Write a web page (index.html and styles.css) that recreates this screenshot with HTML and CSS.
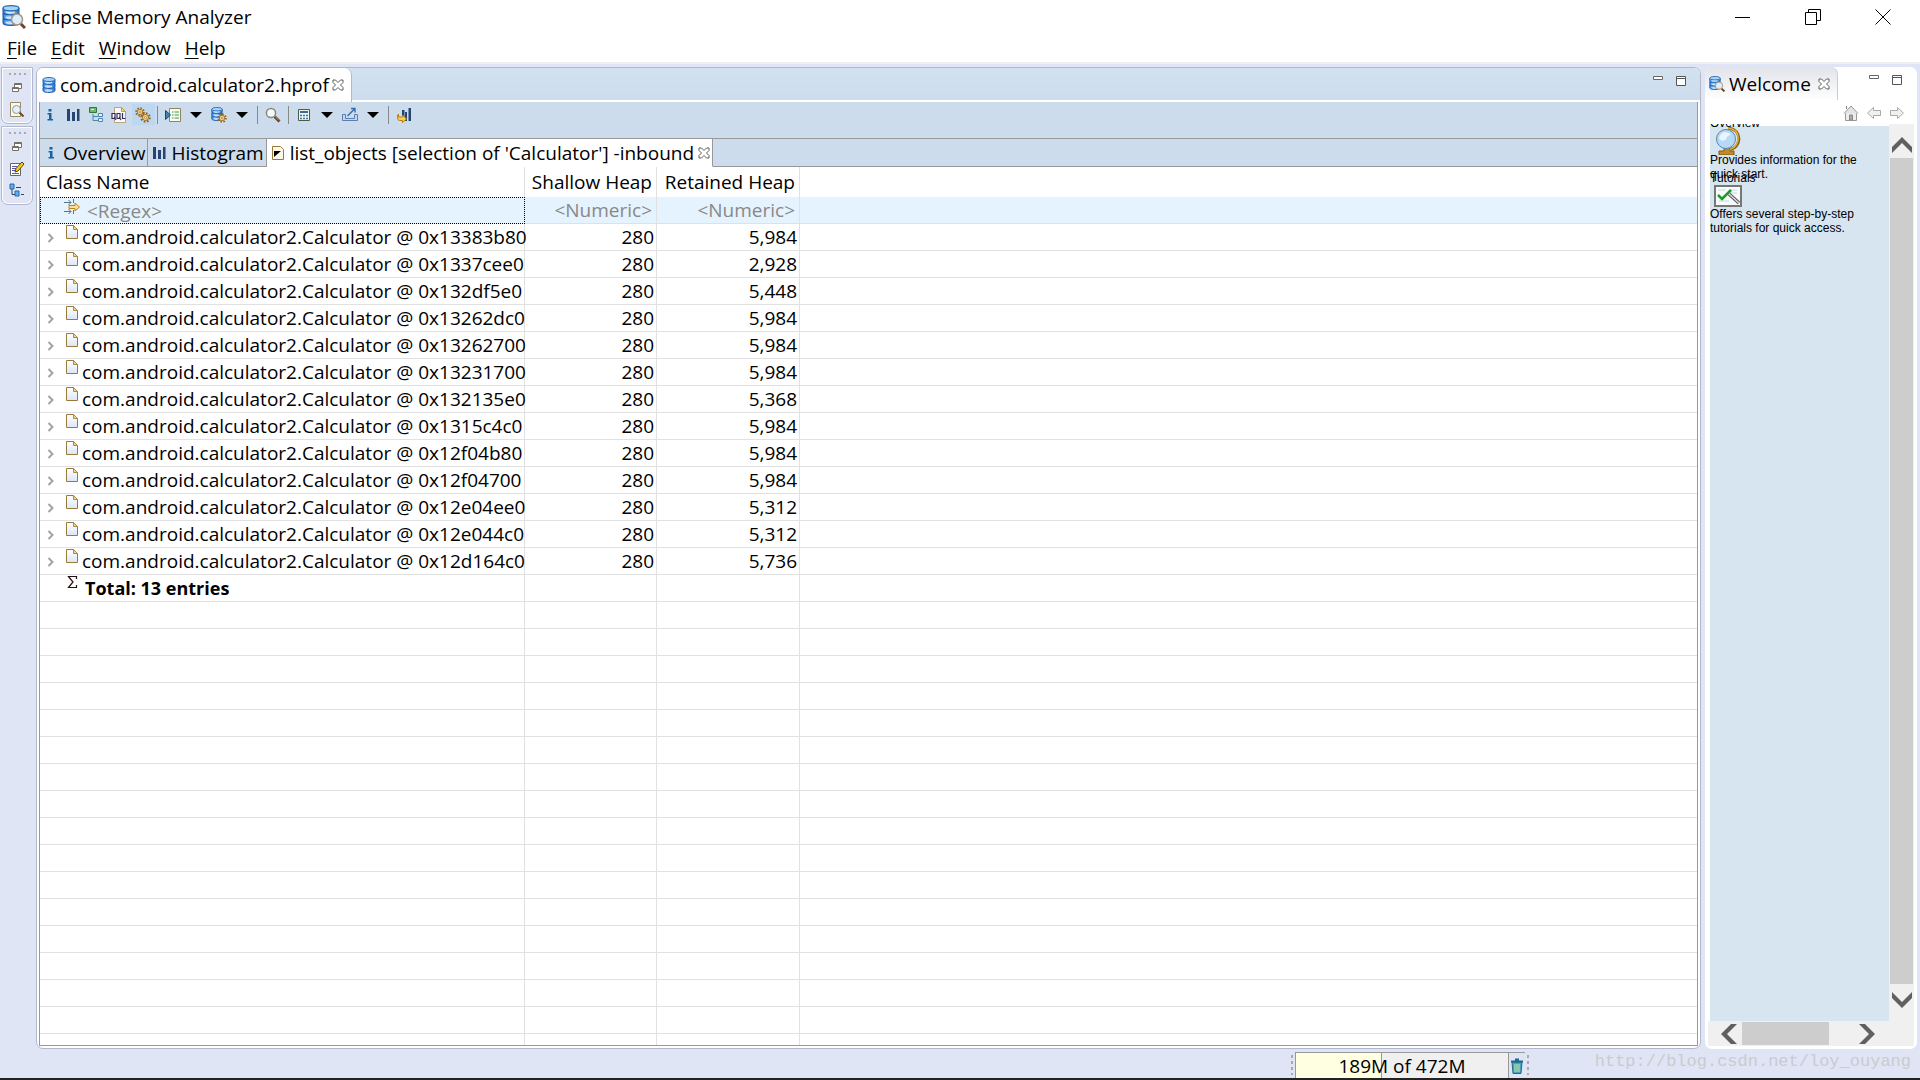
FILE: index.html
```html
<!DOCTYPE html>
<html lang="en">
<head>
    <meta charset="utf-8" />
    <title>Eclipse Memory Analyzer</title>
    <link rel="stylesheet" href="styles.css">
</head>
<body>
    <!-- shared icons -->
    <svg class="defs" width="0" height="0" aria-hidden="true">
        <linearGradient id="blue" x1="0" x2="1" y1="0" y2="0">
            <stop offset="0" stop-color="#2f7fdc"/><stop offset=".4" stop-color="#a9d6fb"/><stop offset="1" stop-color="#2a6fcb"/>
        </linearGradient>
        <linearGradient id="sheet" x1="0" x2="0" y1="0" y2="1">
            <stop offset="0" stop-color="#fff"/><stop offset="1" stop-color="#dbe6f6"/>
        </linearGradient>
        <symbol id="db" viewBox="0 0 13 16">
            <path d="M.5 10.500v3c0 1.300 2.500 2 6 2s6-.7 6-2v-3z" fill="url(#blue)" stroke="#1f5fae"/>
            <path d="M.5 6.500v3c0 1.300 2.500 2 6 2s6-.7 6-2v-3z" fill="url(#blue)" stroke="#1f5fae"/>
            <path d="M.5 2.500v3c0 1.300 2.500 2 6 2s6-.7 6-2v-3z" fill="url(#blue)" stroke="#1f5fae"/>
            <ellipse cx="6.500" cy="2.500" rx="6" ry="2" fill="#a8d4f8" stroke="#2a6db8"/>
            <path d="M2.500 5.200c2 .8 5 .8 7 .2M2.500 9.200c2 .8 5 .8 7 .2M2.500 13.200c2 .8 5 .8 7 .2" fill="none" stroke="#d4ecff"/>
        </symbol>
        <symbol id="dbfind" viewBox="0 0 24 24">
            <use href="#db" x="0" y="0" width="18" height="21"/>
            <path d="M18.500 18.500l4.500 4.500" stroke="#6b4a2c" stroke-width="3"/>
            <circle cx="15" cy="14.500" r="5.500" fill="#dceefb" stroke="#a8977c" stroke-width="1.500"/>
        </symbol>
        <symbol id="info" viewBox="0 0 16 16">
            <path d="M6.500 2h3v2.500h-3zM5.500 6h4v6h1.500v1.500h-5.500v-1.500h1.500v-4.500h-1.500z" fill="#1463a5"/>
        </symbol>
        <symbol id="bars" viewBox="0 0 16 16">
            <path d="M2 2h3v12h-3zM7 5h3v9h-3zM12 2h2.500v12h-2.500z" fill="#264573"/>
        </symbol>
        <symbol id="gear" viewBox="0 0 12 12">
            <circle cx="6" cy="6" r="4.500" fill="none" stroke="#8f6420" stroke-width="2.500" stroke-dasharray="1.800 1.700"/>
            <circle cx="6" cy="6" r="3.200" fill="#f8e2a8" stroke="#b07a26" stroke-width="1.200"/>
            <circle cx="6" cy="6" r="1.200" fill="#fff" stroke="#8f6420" stroke-width=".8"/>
        </symbol>
        <symbol id="find" viewBox="0 0 16 16">
            <path d="M9.500 9.500l5 5" stroke="#5c3d25" stroke-width="2.800"/>
            <path d="M9.500 9l4.500 4.500" stroke="#c79b6b" stroke-width="1"/>
            <circle cx="6" cy="6" r="4.600" fill="#f3f9fd" stroke="#8d8672" stroke-width="1.500"/>
        </symbol>
        <symbol id="close" viewBox="0 0 12 12">
            <path d="M1 1h2.500l2.500 2.500 2.500-2.500h2.500v2.500l-2.500 2.500 2.500 2.500v2.500h-2.500l-2.500-2.500-2.500 2.500h-2.500v-2.500l2.500-2.500-2.500-2.500z" fill="#fff" stroke="#5d5d5d" stroke-width="1"/>
        </symbol>
        <symbol id="caret" viewBox="0 0 12 8"><path d="M0 1h12l-6 6z" fill="#000"/></symbol>
        <symbol id="page" viewBox="0 0 12 14">
            <path d="M.5.5h7l4 4v9h-11z" fill="url(#sheet)" stroke="#9a7a3a"/>
            <path d="M7.500.5v4h4z" fill="#f0d796" stroke="#b5893a"/>
        </symbol>
        <symbol id="arrow" viewBox="0 0 8 10"><path d="M1.500 1l4 4-4 4" fill="none" stroke="#a3a3a3" stroke-width="2"/></symbol>
        <symbol id="min" viewBox="0 0 12 12"><path d="M1.500 1.500h9v3h-9z" fill="#fff" stroke="#666"/></symbol>
        <symbol id="max" viewBox="0 0 12 12"><path d="M1.500 1.500h9v9h-9zM1 3.500h10" fill="#fff" stroke="#555"/></symbol>
        <symbol id="restore" viewBox="0 0 12 12">
            <path d="M3.500 1.500h7v5h-7zM3 2.500h8" fill="#fff" stroke="#766f66"/>
            <path d="M1.500 5.500h6v4h-6zM1 6.500h7" fill="#fff" stroke="#766f66"/>
        </symbol>
        <symbol id="chev" viewBox="0 0 20 16"><path d="M0 10l10-10 10 10v6l-10-10-10 10z" fill="#606060"/></symbol>
    </svg>

    <header class="titlebar">
        <svg class="i24"><use href="#dbfind"/></svg>
        <h1>Eclipse Memory Analyzer</h1>
        <div class="winbtns">
            <button aria-label="Minimize"><svg class="i16" viewBox="0 0 16 16"><path d="M0 8.500h15" stroke="#000"/></svg></button>
            <button aria-label="Restore"><svg class="i16" viewBox="0 0 16 16"><path d="M.5 3.500h11v12h-11zM3.500 3v-2.500h12v11h-3.500" fill="none" stroke="#000"/></svg></button>
            <button aria-label="Close"><svg class="i16" viewBox="0 0 16 16"><path d="M.5.5l15 15M15.500.5l-15 15" stroke="#000"/></svg></button>
        </div>
    </header>

    <nav class="menubar">
        <button><u>F</u>ile</button>
        <button><u>E</u>dit</button>
        <button><u>W</u>indow</button>
        <button><u>H</u>elp</button>
    </nav>

    <div class="workbench">
        <aside class="rail">
            <div class="railbox">
                <span class="grip"></span>
                <button aria-label="Restore"><svg class="i12"><use href="#restore"/></svg></button>
                <button aria-label="Inspector"><svg class="i16" viewBox="0 0 16 16"><path d="M1.500.5h10v14h-10z" fill="#fdf8ea" stroke="#998a63"/><path d="M10 10l4.500 4.500" stroke="#6b4a2c" stroke-width="2"/><circle cx="7.500" cy="7.500" r="4" fill="#e3f1fb" stroke="#8c9aa5"/></svg></button>
            </div>
            <div class="railbox">
                <span class="grip"></span>
                <button aria-label="Restore"><svg class="i12"><use href="#restore"/></svg></button>
                <button aria-label="Notes"><svg class="i16" viewBox="0 0 16 16"><path d="M1.500 2.500h10v12h-10z" fill="#fff" stroke="#666"/><path d="M3 5.500h5M3 7.500h4M3 9.500h3M3 12.500h7" stroke="#55a"/><path d="M6 11l1-3.500 6-6.500 2 2-6 7z" fill="#f5d315" stroke="#4b420c"/></svg></button>
                <button aria-label="Navigation History"><svg class="i16" viewBox="0 0 16 16"><path d="M3 5v6.500h4M7 4.500h5M12 11.500h3" fill="none" stroke="#345"/><path d="M1 1h4v5h-4zM6 8h4v5h-4z" fill="#62adee" stroke="#2168b5"/></svg></button>
            </div>
        </aside>

        <main class="editor">
            <div class="tabs">
                <div class="tab">
                    <svg class="i16 dbicon"><use href="#db"/></svg>
                    <span>com.android.calculator2.hprof</span>
                    <button aria-label="Close"><svg class="i12"><use href="#close"/></svg></button>
                </div>
                <div class="panebtns">
                    <button aria-label="Minimize"><svg class="i12"><use href="#min"/></svg></button>
                    <button aria-label="Maximize"><svg class="i12"><use href="#max"/></svg></button>
                </div>
            </div>

            <div class="pane">
                <div class="toolbar">
                    <button aria-label="Overview"><svg class="i16"><use href="#info"/></svg></button>
                    <button aria-label="Histogram"><svg class="i16"><use href="#bars"/></svg></button>
                    <button aria-label="Dominator tree"><svg class="i16" viewBox="0 0 16 16"><path d="M5 7v6.500h5M5 9.500h5" fill="none" stroke="#4a86b0"/><path d="M1.500.5h7v5h-7z" fill="#6fb76f" stroke="#2d7a3e"/><path d="M3 2.500h3" stroke="#cfc"/><path d="M10.500 6.500h4v3h-4zM10.500 11.500h4v3h-4z" fill="#e8f3fb" stroke="#4a86b0"/></svg></button>
                    <button aria-label="OQL"><svg class="i16" viewBox="0 0 16 16"><path d="M3.500.5h7l4 4v11h-11z" fill="#fbfbfb" stroke="#b9a57a"/><path d="M10.500.5v4h4z" fill="#ecd190" stroke="#c39d4e"/><path d="M1 6.500h3v5h-3zM6 6.500h3v5h-3zM3 10l2 3M8 10l2 3M11.500 6v5.500h3" fill="#fff" stroke="#352b58" stroke-width="1.200"/></svg></button>
                    <button class="on" aria-label="Thread overview"><svg class="i16" viewBox="0 0 16 16"><use href="#gear" x="0" y="0" width="10" height="10"/><use href="#gear" x="5" y="5" width="11" height="11"/></svg></button>
                    <i class="sep"></i>
                    <button aria-label="Run report"><svg class="i16" viewBox="0 0 16 16"><path d="M4.500 1.500h11v13h-11z" fill="#fbfbf4" stroke="#8a8660"/><path d="M7 5h1.500M7 8h1.500M7 11h1.500M9.500 5h4.500M9.500 8h4.500M9.500 11h4.500" stroke="#3d9a4a"/><path d="M.5 3.500v9l5-4.500z" fill="#3c86a8" stroke="#19486b"/></svg></button>
                    <button aria-label="Reports menu"><svg class="caret"><use href="#caret"/></svg></button>
                    <button aria-label="Queries"><svg class="i16" viewBox="0 0 16 16"><use href="#db" x="0" y="0" width="12" height="14"/><use href="#gear" x="6" y="6" width="10" height="10"/></svg></button>
                    <button aria-label="Queries menu"><svg class="caret"><use href="#caret"/></svg></button>
                    <i class="sep"></i>
                    <button aria-label="Find object"><svg class="i16"><use href="#find"/></svg></button>
                    <i class="sep"></i>
                    <button aria-label="Calculate"><svg class="i16" viewBox="0 0 16 16"><path d="M2.500 2.500h11v11h-11z" fill="#eef3ec" stroke="#4c5b4c"/><path d="M4 5h8" stroke="#356c9c" stroke-width="2"/><path d="M4 8.500h8M4 11.500h8" stroke="#3f76a6" stroke-width="1.500" stroke-dasharray="2 1"/></svg></button>
                    <button aria-label="Calculate menu"><svg class="caret"><use href="#caret"/></svg></button>
                    <button aria-label="Export"><svg class="i16" viewBox="0 0 16 16"><path d="M.5 7.500h3v4h9v-4h3v6h-15z" fill="#c4d5ee" stroke="#5a7fb5"/><path d="M5.500 9l7-7M9 1.500h4v4" fill="none" stroke="#336caf" stroke-width="1.400"/></svg></button>
                    <button aria-label="Export menu"><svg class="caret"><use href="#caret"/></svg></button>
                    <i class="sep"></i>
                    <button aria-label="Compare"><svg class="i16" viewBox="0 0 16 16"><path d="M6 3h2.500v7h-2.500zM9 5h2v9h-2zM12.500 1h2.500v13h-2.500z" fill="#264573"/><path d="M2.500 7v3h4v-2l4 4-4 3.500v-2h-3c-2 0-3-4-1-6.500z" fill="#f8cf52" stroke="#b77d12"/></svg></button>
                </div>

                <div class="subtabs">
                    <button class="subtab"><svg class="i16"><use href="#info"/></svg>Overview</button>
                    <button class="subtab"><svg class="i16"><use href="#bars"/></svg>Histogram</button>
                    <button class="subtab active"><svg class="i16" viewBox="0 0 16 16"><path d="M2.500 1.500h8l3 3v10h-11z" fill="#fdf9ea" stroke="#9a7a3a"/><path d="M4 6h7l-7 6z" fill="#000"/></svg>list_objects [selection of 'Calculator'] -inbound<svg class="i12"><use href="#close"/></svg></button>
                    <div class="fill"></div>
                </div>

                <div class="results">
                    <table>
                        <colgroup><col class="name"><col class="shallow"><col class="retained"><col></colgroup>
                        <thead>
                            <tr><th>Class Name</th><th class="num">Shallow Heap</th><th class="num">Retained Heap</th><th></th></tr>
                        </thead>
                        <tbody>
                            <tr class="filter"><td><div class="cell"><svg class="i16" viewBox="0 0 16 16"><path d="M0 3.500h7M4.500 1l2.500 2.500-2.500 2.500M9.500 0v4M0 12.500h7M4.500 10l2.500 2.500-2.500 2.500M9.500 11v4" fill="none" stroke="#557387"/><path d="M5 6.500h6v-2.500l4.500 4-4.500 4v-2.500h-6z" fill="#fbdf9b" stroke="#bf8315"/></svg>&lt;Regex&gt;</div></td><td class="num">&lt;Numeric&gt;</td><td class="num">&lt;Numeric&gt;</td><td></td></tr>
                            <tr><td><div class="cell"><svg class="exp"><use href="#arrow"/></svg><svg class="page"><use href="#page"/></svg>com.android.calculator2.Calculator @ 0x13383b80</div></td><td class="num">280</td><td class="num">5,984</td><td></td></tr>
                            <tr><td><div class="cell"><svg class="exp"><use href="#arrow"/></svg><svg class="page"><use href="#page"/></svg>com.android.calculator2.Calculator @ 0x1337cee0</div></td><td class="num">280</td><td class="num">2,928</td><td></td></tr>
                            <tr><td><div class="cell"><svg class="exp"><use href="#arrow"/></svg><svg class="page"><use href="#page"/></svg>com.android.calculator2.Calculator @ 0x132df5e0</div></td><td class="num">280</td><td class="num">5,448</td><td></td></tr>
                            <tr><td><div class="cell"><svg class="exp"><use href="#arrow"/></svg><svg class="page"><use href="#page"/></svg>com.android.calculator2.Calculator @ 0x13262dc0</div></td><td class="num">280</td><td class="num">5,984</td><td></td></tr>
                            <tr><td><div class="cell"><svg class="exp"><use href="#arrow"/></svg><svg class="page"><use href="#page"/></svg>com.android.calculator2.Calculator @ 0x13262700</div></td><td class="num">280</td><td class="num">5,984</td><td></td></tr>
                            <tr><td><div class="cell"><svg class="exp"><use href="#arrow"/></svg><svg class="page"><use href="#page"/></svg>com.android.calculator2.Calculator @ 0x13231700</div></td><td class="num">280</td><td class="num">5,984</td><td></td></tr>
                            <tr><td><div class="cell"><svg class="exp"><use href="#arrow"/></svg><svg class="page"><use href="#page"/></svg>com.android.calculator2.Calculator @ 0x132135e0</div></td><td class="num">280</td><td class="num">5,368</td><td></td></tr>
                            <tr><td><div class="cell"><svg class="exp"><use href="#arrow"/></svg><svg class="page"><use href="#page"/></svg>com.android.calculator2.Calculator @ 0x1315c4c0</div></td><td class="num">280</td><td class="num">5,984</td><td></td></tr>
                            <tr><td><div class="cell"><svg class="exp"><use href="#arrow"/></svg><svg class="page"><use href="#page"/></svg>com.android.calculator2.Calculator @ 0x12f04b80</div></td><td class="num">280</td><td class="num">5,984</td><td></td></tr>
                            <tr><td><div class="cell"><svg class="exp"><use href="#arrow"/></svg><svg class="page"><use href="#page"/></svg>com.android.calculator2.Calculator @ 0x12f04700</div></td><td class="num">280</td><td class="num">5,984</td><td></td></tr>
                            <tr><td><div class="cell"><svg class="exp"><use href="#arrow"/></svg><svg class="page"><use href="#page"/></svg>com.android.calculator2.Calculator @ 0x12e04ee0</div></td><td class="num">280</td><td class="num">5,312</td><td></td></tr>
                            <tr><td><div class="cell"><svg class="exp"><use href="#arrow"/></svg><svg class="page"><use href="#page"/></svg>com.android.calculator2.Calculator @ 0x12e044c0</div></td><td class="num">280</td><td class="num">5,312</td><td></td></tr>
                            <tr><td><div class="cell"><svg class="exp"><use href="#arrow"/></svg><svg class="page"><use href="#page"/></svg>com.android.calculator2.Calculator @ 0x12d164c0</div></td><td class="num">280</td><td class="num">5,736</td><td></td></tr>
                            <tr class="total"><td><div class="cell"><svg class="i16" viewBox="0 0 16 16"><path d="M11.500 4v-2.500h-8l4.500 5.500-4.500 5.500h8v-2.500" fill="none" stroke="#211" stroke-width="1.200"/></svg>Total: 13 entries</div></td><td></td><td></td><td></td></tr>
                            <tr class="blank"><td></td><td></td><td></td><td></td></tr>
                        </tbody>
                    </table>
                </div>
            </div>
        </main>

        <section class="welcome">
            <div class="wtabs">
                <div class="wtab">
                    <svg class="i16"><use href="#dbfind"/></svg>
                    <span>Welcome</span>
                    <button aria-label="Close"><svg class="i12"><use href="#close"/></svg></button>
                </div>
                <div class="panebtns">
                    <button aria-label="Minimize"><svg class="i12"><use href="#min"/></svg></button>
                    <button aria-label="Maximize"><svg class="i12"><use href="#max"/></svg></button>
                </div>
            </div>
            <div class="wtools">
                <button aria-label="Home"><svg class="i16" viewBox="0 0 16 16"><path d="M2.500 8v7.500h11v-7.500" fill="#eee" stroke="#999"/><path d="M1 8.500l7-7.500 7 7.500" fill="#e4e4e4" stroke="#999"/><path d="M3.500 1v3M6.500 15v-5h3v5z" fill="#aaa" stroke="#888"/></svg></button>
                <button aria-label="Back"><svg class="i16" viewBox="0 0 16 16"><path d="M1.500 8l6-5.500v3h7v5h-7v3z" fill="#f1f1ec" stroke="#aaa"/></svg></button>
                <button aria-label="Forward"><svg class="i16" viewBox="0 0 16 16"><path d="M14.500 8l-6-5.500v3h-7v5h7v3z" fill="#f1f1ec" stroke="#aaa"/></svg></button>
            </div>
            <div class="browser">
                <div class="intro">
                    <a href="#">
                        <b>Overview</b>
                        <svg class="globe" viewBox="0 0 28 28"><path d="M14 1c16 2 12 20 3 21" fill="none" stroke="#8a6412" stroke-width="3"/><path d="M14 1c15 2 11 19 3 21" fill="none" stroke="#e2b13c" stroke-width="1.500"/><path d="M10 20h6v4h4v4h-15v-4h5z" fill="#c18a24" stroke="#815a10"/><circle cx="12" cy="12" r="9.500" fill="#b5d9f6" stroke="#5a87ad"/><path d="M5 11c2-7 9-7 12-3-3 0-4 2-5 4s-5 3-7-1z" fill="#e9f6ff"/></svg>
                        <span>Provides information for the quick start.</span>
                    </a>
                    <a href="#" class="second">
                        <b>Tutorials</b>
                        <svg class="board" viewBox="0 0 28 22"><path d="M1 1h26v20h-26z" fill="#f6fbfb" stroke="#777" stroke-width="2"/><path d="M4 5h8M5 16h10M15 5h8M16 8h7" stroke="#c5dcda"/><path d="M4 10l4 4 9-9" fill="none" stroke="#1c9a26" stroke-width="2.500"/><path d="M15 9l10 9" stroke="#555" stroke-width="3.500"/><path d="M15 9l10 9" stroke="#ddd" stroke-width="1.500"/></svg>
                        <span>Offers several step-by-step tutorials for quick access.</span>
                    </a>
                </div>
                <div class="vbar">
                    <svg class="chev"><use href="#chev"/></svg>
                    <div class="thumb"></div>
                    <svg class="chev down"><use href="#chev"/></svg>
                </div>
                <div class="hbar">
                    <svg class="chev left"><use href="#chev"/></svg>
                    <div class="thumb"></div>
                    <svg class="chev right"><use href="#chev"/></svg>
                </div>
            </div>
        </section>
    </div>

    <footer class="status">
        <span class="vgrip"></span>
        <div class="heap">189M of 472M</div>
        <button class="gc" aria-label="Run Garbage Collector"><svg class="i16" viewBox="0 0 16 16"><path d="M3 4h10l-1 11.500h-8z" fill="#4aa3b8" stroke="#1d6b8e"/><path d="M2 3.500h12M6 1.500h4" stroke="#1d6b8e" stroke-width="2"/><path d="M6 6v8M8 6v8M10 6v8" stroke="#c3e7a8"/></svg></button>
        <span class="vgrip"></span>
        <span class="mark">http://blog.csdn.net/loy_ouyang</span>
    </footer>
</body>
</html>
```
FILE: styles.css
```css
*{
    box-sizing:border-box;
    margin:0;
    padding:0;
}
body{
    display:flex;
    flex-direction:column;
    height:100vh;
    overflow:hidden;
    background:#dfe5f5;
    color:#000;
    font-family:"Open Sans","Noto Sans",sans-serif;
    font-size:19px;
    line-height:26px;
}
button{
    display:flex;
    align-items:center;
    justify-content:center;
    border:0;
    background:none;
    font:inherit;
    color:inherit;
    white-space:nowrap;
}
svg{
    flex:none;
    display:block;
}
.defs{
    position:absolute;
}
.i12{
    width:12px;
    height:12px;
}
.i16{
    width:16px;
    height:16px;
}
.i24{
    width:24px;
    height:24px;
}

/* title and menu */
.titlebar{
    display:flex;
    align-items:center;
    height:34px;
    padding:0 2px;
    gap:5px;
    background:#fff;
}
.titlebar h1{
    font-size:19px;
    font-weight:normal;
}
.winbtns{
    display:flex;
    margin-left:auto;
}
.winbtns button{
    width:70px;
    height:34px;
}
.menubar{
    display:flex;
    gap:14px;
    height:30px;
    padding-left:7px;
    background:#fff;
    border-bottom:2px solid #f0f0f0;
}
.menubar u{
    text-underline-offset:3px;
    text-decoration-thickness:1px;
}

/* workbench */
.workbench{
    flex:1;
    display:flex;
    min-height:0;
    padding:3px 3px 0 1px;
}
.rail{
    width:32px;
    margin-right:3px;
}
.railbox{
    display:flex;
    flex-direction:column;
    align-items:center;
    margin-bottom:2px;
    padding:4px 0 2px;
    border:1px solid #b1b8cd;
    border-radius:0 0 7px 7px;
    box-shadow:inset 0 0 0 1px #fff;
}
.railbox button{
    width:24px;
    height:22px;
}
.grip{
    width:17px;
    height:4px;
    margin-bottom:1px;
    background:repeating-linear-gradient(90deg,#aaa 0,#aaa 2px,transparent 2px,transparent 5px) 0 1px/17px 2px no-repeat;
}
.editor{
    flex:1;
    display:flex;
    flex-direction:column;
    min-width:0;
    background:#fff;
    border:1px solid #b1b8cd;
    border-radius:7px;
    overflow:hidden;
}
.tabs{
    display:flex;
    height:34px;
    background:linear-gradient(#d2e1ee,#cddded) 0 0/100% 32px no-repeat;
}
.tab{
    display:flex;
    align-items:center;
    height:34px;
    padding:0 4px;
    background:#fff;
    border-right:1px solid #b1b8cd;
    border-radius:0 7px 0 0;
}
.dbicon{
    margin-right:3px;
}
.tab button{
    width:18px;
}
.panebtns{
    display:flex;
    gap:11px;
    margin-left:auto;
    padding-right:13px;
    align-items:flex-start;
    padding-top:7px;
}
.pane{
    flex:1;
    display:flex;
    flex-direction:column;
    min-height:0;
    margin:0 2px 2px;
    border:solid #999;
    border-width:0 1px 1px;
}
.toolbar{
    display:flex;
    height:36px;
    background:#cddcec;
}
.toolbar button{
    width:23px;
    height:21px;
    margin-top:2px;
    padding-right:3px;
}
.toolbar .on{
    padding-right:2px;
    background:#bdd7f1;
}
.caret{
    width:12px;
    height:8px;
}
.sep{
    width:1px;
    height:18px;
    margin:4px 5px 0 2px;
    background:#888;
}
.subtabs{
    display:flex;
    height:29px;
    background:#cddcec;
    border-top:1px solid #999;
}
.subtab{
    gap:4px;
    padding:0 2px 0 3px;
    border-right:1px solid #999;
    border-bottom:1px solid #999;
}
.subtab.active{
    background:#fff;
    border-bottom-color:#fff;
}
.fill{
    flex:1;
    border-bottom:1px solid #999;
}

/* result table */
.results{
    flex:1;
    min-height:0;
    overflow:hidden;
}
table{
    width:100%;
    height:100%;
    table-layout:fixed;
    border-collapse:separate;
    border-spacing:0;
    background:#fff;
}
.name{
    width:485px;
}
.shallow{
    width:132px;
}
.retained{
    width:143px;
}
th{
    height:30px;
    padding:0 4px 0 6px;
    font-weight:normal;
    text-align:left;
    white-space:nowrap;
}
td{
    height:27px;
    padding:0 2px 0 3px;
    border-bottom:1px solid #e1e1e1;
    white-space:nowrap;
}
th,td{
    border-right:1px solid #e1e1e1;
}
th:last-child,td:last-child{
    border-right:0;
}
.num{
    text-align:right;
}
.filter td{
    padding-right:4px;
    background:#e5f3ff;
    color:#888;
}
.filter td:first-child{
    border:1px dotted #000;
}
.cell{
    display:flex;
    align-items:flex-start;
    height:26px;
}
.exp{
    width:8px;
    height:10px;
    margin:9px 11px 0 4px;
}
.page{
    width:12px;
    height:14px;
    margin:1px 4px 0 0;
}
.filter .cell{
    height:24px;
    padding-left:20px;
    gap:7px;
    line-height:24px;
}
.total{
    font-size:18px;
    font-weight:bold;
}
.total .cell{
    padding-left:22px;
    gap:4px;
}
.blank td{
    height:auto;
    border-bottom:0;
    background:repeating-linear-gradient(#fff 0,#fff 26px,#e1e1e1 26px,#e1e1e1 27px);
}

/* welcome view */
.welcome{
    width:212px;
    margin-left:4px;
    display:flex;
    flex-direction:column;
    padding:0 3px 3px;
    background:#fff;
    border-radius:7px;
}
.wtabs{
    display:flex;
    height:33px;
}
.wtab{
    display:flex;
    align-items:center;
    gap:4px;
    margin-left:-3px;
    padding:0 4px;
    background:linear-gradient(#e1e3ea,#fff);
    border-right:1px solid #c8ccd8;
    border-radius:7px 7px 0 0;
}
.wtab button{
    width:18px;
}
.wtabs .panebtns{
    padding-right:11px;
}
.wtools{
    display:flex;
    justify-content:flex-end;
    gap:7px;
    height:24px;
    padding-right:9px;
}
.wtools button{
    height:26px;
}
.browser{
    flex:1;
    display:grid;
    grid-template-columns:1fr 25px;
    grid-template-rows:1fr 25px;
    min-height:0;
    background:#f0f0f0;
}
.intro{
    min-height:0;
    overflow:hidden;
    border-left:2px solid #fff;
    background:linear-gradient(#fff 2px,#d6e5ef 2px);
    font-family:"Liberation Sans",Arial,sans-serif;
    font-size:12px;
    line-height:14px;
}
.intro a{
    display:block;
    color:#000;
    text-decoration:none;
}
.intro b{
    display:block;
    font-weight:normal;
}
.intro a:first-child{
    margin-top:-8px;
}
.intro .second{
    margin-top:-10px;
}
.intro span{
    display:block;
    width:160px;
}
.globe{
    width:28px;
    height:28px;
    margin:-3px 0 0 4px;
}
.globe + span{
    margin-top:-2px;
}
.board{
    width:28px;
    height:22px;
    margin-left:4px;
}
.vbar{
    display:flex;
    flex-direction:column;
    align-items:center;
    padding:13px 0;
}
.thumb{
    flex:1;
    background:#cdcdcd;
}
.vbar .thumb{
    width:23px;
    margin:5px 0 8px;
}
.chev{
    width:20px;
    height:16px;
}
.down{
    transform:rotate(180deg);
}
.left{
    transform:rotate(-90deg);
}
.right{
    transform:rotate(90deg);
}
.hbar{
    grid-column:1/3;
    display:flex;
    align-items:center;
    padding:0 37px 0 11px;
}
.hbar .thumb{
    height:23px;
    margin:0 28px 0 3px;
}

/* status line */
.status{
    position:relative;
    display:flex;
    justify-content:flex-end;
    align-items:flex-end;
    height:31px;
    padding-right:389px;
    border-bottom:2px solid #222;
}
.heap{
    width:214px;
    height:26px;
    border:1px solid #999;
    border-bottom:0;
    background:linear-gradient(90deg,#ffffe1 85px,#999 85px,#999 86px,#f0f0f0 86px);
    text-align:center;
}
.gc{
    width:16px;
    height:26px;
    border-top:1px solid #999;
}
.vgrip{
    width:2px;
    height:20px;
    margin:0 2px 3px;
    background:repeating-linear-gradient(#aaa 0,#aaa 3px,transparent 3px,transparent 6px);
}
.mark{
    position:absolute;
    right:9px;
    top:0;
    color:#c9cbd0;
    font-family:"Liberation Mono",monospace;
    font-size:17px;
}
```
